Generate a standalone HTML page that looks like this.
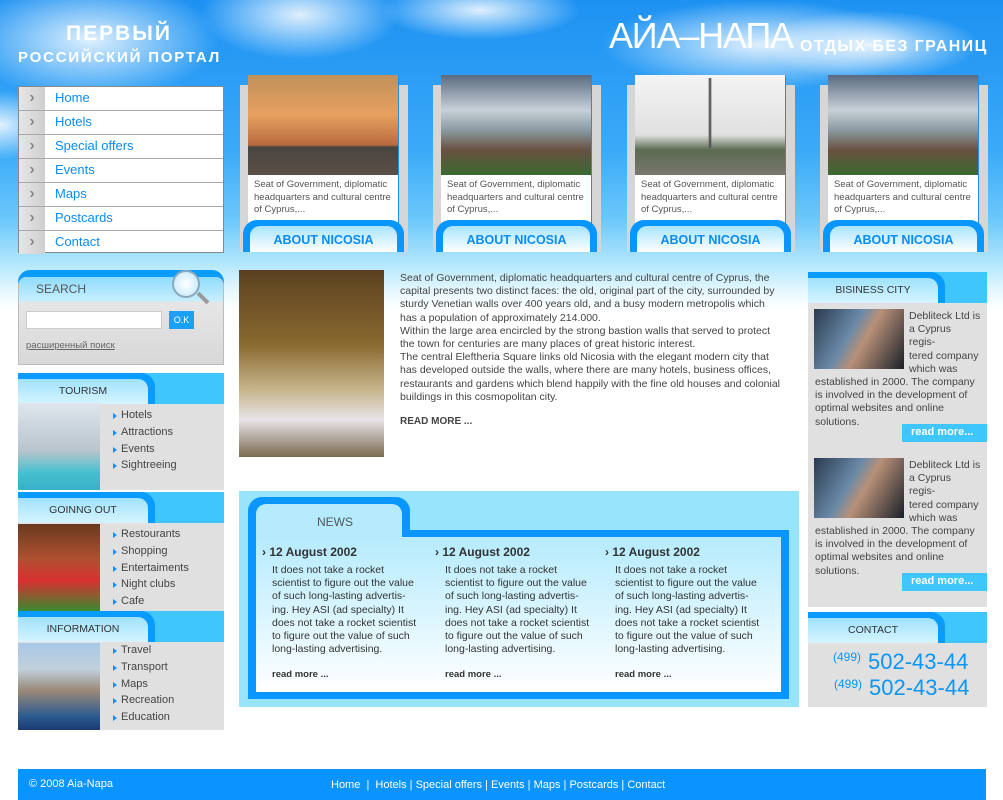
<!DOCTYPE html>
<html><head><meta charset="utf-8"><style>
*{margin:0;padding:0;box-sizing:border-box}
body{width:1003px;height:800px;position:relative;overflow:hidden;background:#fff;font-family:"Liberation Sans","DejaVu Sans",sans-serif;font-size:11px;color:#444}
.a{position:absolute}
#sky{left:0;top:0;width:1003px;height:310px;background:linear-gradient(#1e92f2 0px,#2a9cf5 70px,#3aaaf8 150px,#6cc8fb 220px,#b5e8fd 265px,#e8f8ff 292px,#fff 310px)}
.cloud{border-radius:50%;background:radial-gradient(rgba(255,255,255,.85),rgba(255,255,255,0) 70%)}
.nav{left:18px;top:86px;width:206px;height:167px;background:#fff;border:1px solid #888}
.nav div{height:24px;border-bottom:1px solid #aaa;position:relative;font-size:13px;color:#0a8cf5;padding:3px 0 0 36px}
.nav div:last-child{border:0}
.nav div:before{content:"›";position:absolute;left:0;top:0;width:26px;height:23px;background:linear-gradient(90deg,#e6e6e6,#cfcfcf);color:#888;font-weight:bold;font-size:16px;text-align:center;line-height:21px}
.card{width:168px;height:177px}
.card .bk{left:0;top:10px;width:168px;height:167px;background:#d6d6d6}
.card .wh{left:8px;top:0;width:151px;height:170px;background:#fff;border-right:1px solid #1a8ef5}
.card .im{left:8px;top:0;width:150px;height:100px}
.card .tx{left:14px;top:104px;width:146px;font-size:9.5px;line-height:12.5px;color:#555}
.card .btn{left:3px;top:145px;width:161px;height:32px;background:#0a96ff;border-radius:14px 14px 0 0}
.card .btn div{position:absolute;left:7px;top:6px;width:147px;height:26px;border-radius:10px 10px 0 0;background:linear-gradient(#a8e4fd,#fff);color:#0a8cf5;font-weight:bold;font-size:12.5px;text-align:center;padding-top:7px}
.hdr{height:31px;background:#3fc6fd}
.hdr .t{position:absolute;left:0;top:0;width:137px;height:31px;background:#0a9bff;border-radius:0 14px 0 0}
.hdr .t div{position:absolute;left:0;top:6px;width:130px;height:25px;border-radius:0 10px 0 0;background:linear-gradient(#9fe2fd,#d6f4ff);font-size:10.5px;color:#333;text-align:center;padding-top:6px}
.blk{left:18px;width:206px;background:#e0e0e0}
.blk ul{position:absolute;left:95px;list-style:none;font-size:11px;color:#444}
.blk li{height:16.8px;padding-left:8px;position:relative}
.blk li:before{content:"";position:absolute;left:0;top:4px;border-left:4px solid #1a8ef5;border-top:3px solid transparent;border-bottom:3px solid transparent}
.bl{color:#fff}
</style></head><body>
<div id="sky" class="a"></div>
<div class="a cloud" style="left:-40px;top:-20px;width:260px;height:120px"></div>
<div class="a cloud" style="left:200px;top:-30px;width:200px;height:90px"></div>
<div class="a cloud" style="left:600px;top:0;width:320px;height:90px"></div>
<div class="a cloud" style="left:760px;top:10px;width:220px;height:70px"></div>
<div class="a cloud" style="left:380px;top:-20px;width:200px;height:60px"></div>
<div class="a cloud" style="left:-60px;top:90px;width:120px;height:70px"></div>

<div class="a bl" style="left:66px;top:22px;font-size:21px;font-weight:bold;letter-spacing:2px">ПЕРВЫЙ</div>
<div class="a bl" style="left:18px;top:49px;font-size:15px;font-weight:bold;letter-spacing:1.8px">РОССИЙСКИЙ ПОРТАЛ</div>
<div class="a bl" style="left:609px;top:16px;font-size:36px;letter-spacing:-1.2px;line-height:40px">АЙА–НАПА</div>
<div class="a bl" style="left:800px;top:38px;font-size:16px;font-weight:bold;letter-spacing:1.4px">ОТДЫХ БЕЗ ГРАНИЦ</div>

<div class="a nav"><div>Home</div><div>Hotels</div><div>Special offers</div><div>Events</div><div>Maps</div><div>Postcards</div><div>Contact</div></div>

<div class="a card" style="left:240px;top:75px"><div class="a bk"></div><div class="a wh"></div><div class="a im" style="background:linear-gradient(#c0905a,#e8a060 40%,#b86a40 70%,#4a4440 72%,#5a5048)"></div><div class="a tx">Seat of Government, diplomatic headquarters and cultural centre of Cyprus,...</div><div class="a btn"><div>ABOUT NICOSIA</div></div></div>
<div class="a card" style="left:433px;top:75px"><div class="a bk"></div><div class="a wh"></div><div class="a im" style="background:linear-gradient(#5a6a80,#c8d0d8 35%,#8a9aa0 55%,#6a5040 75%,#3a6a30)"></div><div class="a tx">Seat of Government, diplomatic headquarters and cultural centre of Cyprus,...</div><div class="a btn"><div>ABOUT NICOSIA</div></div></div>
<div class="a card" style="left:627px;top:75px"><div class="a bk"></div><div class="a wh"></div><div class="a im" style="background:linear-gradient(#f4f4f4,#e0e0e0 60%,#5a6a50 75%,#7a7870)"><div class="a" style="left:70px;top:3px;width:10px;height:70px;background:linear-gradient(90deg,transparent 30%,#555 45%,#555 55%,transparent 70%)"></div></div><div class="a tx">Seat of Government, diplomatic headquarters and cultural centre of Cyprus,...</div><div class="a btn"><div>ABOUT NICOSIA</div></div></div>
<div class="a card" style="left:820px;top:75px"><div class="a bk"></div><div class="a wh"></div><div class="a im" style="background:linear-gradient(#5a6a80,#c8d0d8 35%,#8a9aa0 55%,#6a5040 75%,#3a6a30)"></div><div class="a tx">Seat of Government, diplomatic headquarters and cultural centre of Cyprus,...</div><div class="a btn"><div>ABOUT NICOSIA</div></div></div>

<!-- search -->
<div class="a" style="left:18px;top:270px;width:206px;height:95px;background:#0a9bff;border-radius:12px 12px 0 0"></div>
<div class="a" style="left:18px;top:277px;width:206px;height:88px;background:linear-gradient(#8fdcfd,#c8efff 24px,#e6e6e6 25px,#d8d8d8);border-radius:8px 8px 0 0;border:1px solid #bbb;border-top:0"></div>
<div class="a" style="left:36px;top:282px;font-size:12px;color:#555">SEARCH</div>
<div class="a" style="left:172px;top:270px;width:28px;height:28px;border-radius:50%;border:2px solid #8ab;background:radial-gradient(#fff,#bfe6fb)"></div>
<div class="a" style="left:196px;top:296px;width:14px;height:4px;background:#999;transform:rotate(45deg)"></div>
<div class="a" style="left:26px;top:311px;width:136px;height:18px;background:#fff;border:1px solid #ccc"></div>
<div class="a" style="left:169px;top:311px;width:25px;height:18px;background:#1aa0f5;color:#fff;font-size:9px;text-align:center;line-height:18px">O.K</div>
<div class="a" style="left:26px;top:340px;font-size:9.5px;color:#666;text-decoration:underline">расширенный поиск</div>

<!-- blocks -->
<div class="a blk" style="top:373px;height:117px"><div class="a hdr" style="left:0;top:0;width:206px"><div class="t"><div>TOURISM</div></div></div><div class="a" style="left:0;top:30px;width:82px;height:87px;background:linear-gradient(#dfe6ee,#b8c4cc 55%,#46c0d0 80%,#38b0c8)"></div><ul style="top:36px"><li>Hotels</li><li>Attractions</li><li>Events</li><li>Sightreeing</li></ul></div>
<div class="a blk" style="top:492px;height:119px"><div class="a hdr" style="left:0;top:0;width:206px"><div class="t"><div>GOINNG OUT</div></div></div><div class="a" style="left:0;top:32px;width:82px;height:87px;background:linear-gradient(#6a3a20,#b05030 40%,#d83030 65%,#3a8a30)"></div><ul style="top:36px"><li>Restourants</li><li>Shopping</li><li>Entertaiments</li><li>Night clubs</li><li>Cafe</li></ul></div>
<div class="a blk" style="top:611px;height:119px"><div class="a hdr" style="left:0;top:0;width:206px"><div class="t"><div>INFORMATION</div></div></div><div class="a" style="left:0;top:32px;width:82px;height:87px;background:linear-gradient(#a8c8e8,#c0d0dc 30%,#9a8878 55%,#2a5a90 85%,#1a3a70)"></div><ul style="top:33px"><li>Travel</li><li>Transport</li><li>Maps</li><li>Recreation</li><li>Education</li></ul></div>

<!-- main -->
<div class="a" style="left:239px;top:270px;width:145px;height:187px;background:linear-gradient(#5a4020,#8a6a30 40%,#c8b890 65%,#e8e4e8 80%,#7a6a50)"></div>
<div class="a" style="left:400px;top:272px;width:398px;font-size:10.5px;line-height:13.2px;color:#444">Seat of Government, diplomatic headquarters and cultural centre of Cyprus, the<br>capital presents two distinct faces: the old, original part of the city, surrounded by<br>sturdy Venetian walls over 400 years old, and a busy modern metropolis which<br>has a population of approximately 214.000.<br>Within the large area encircled by the strong bastion walls that served to protect<br>the town for centuries are many places of great historic interest.<br>The central Eleftheria Square links old Nicosia with the elegant modern city that<br>has developed outside the walls, where there are many hotels, business offices,<br>restaurants and gardens which blend happily with the fine old houses and colonial<br>buildings in this cosmopolitan city.</div>
<div class="a" style="left:400px;top:416px;font-size:10px;font-weight:bold;color:#444">READ MORE ...</div>

<!-- news -->
<div class="a" style="left:239px;top:491px;width:560px;height:216px;background:#99e4fd"></div>
<div class="a" style="left:248px;top:497px;width:162px;height:40px;background:#0a96ff;border-radius:14px 14px 0 0"></div>
<div class="a" style="left:248px;top:530px;width:541px;height:169px;background:#0a96ff"></div>
<div class="a" style="left:256px;top:504px;width:146px;height:40px;background:#b5ebfd;border-radius:10px 10px 0 0"></div>
<div class="a" style="left:256px;top:537px;width:525px;height:155px;background:linear-gradient(#b5ebfd,#f4fcff 85%,#fff)"></div>
<div class="a" style="left:317px;top:515px;font-size:12px;color:#555">NEWS</div>
<div class="a" style="left:262px;top:545px;width:170px"><b style="font-size:12px;color:#333">› 12 August 2002</b><div style="padding-left:10px;margin-top:5px;font-size:10.5px;line-height:13.2px;color:#333">It does not take a rocket<br>scientist to figure out the value<br>of such long-lasting advertis-<br>ing. Hey ASI (ad specialty) It<br>does not take a rocket scientist<br>to figure out the value of such<br>long-lasting advertising.</div><div style="padding-left:10px;margin-top:13px;font-size:9.5px;font-weight:bold;color:#333">read more ...</div></div>
<div class="a" style="left:435px;top:545px;width:170px"><b style="font-size:12px;color:#333">› 12 August 2002</b><div style="padding-left:10px;margin-top:5px;font-size:10.5px;line-height:13.2px;color:#333">It does not take a rocket<br>scientist to figure out the value<br>of such long-lasting advertis-<br>ing. Hey ASI (ad specialty) It<br>does not take a rocket scientist<br>to figure out the value of such<br>long-lasting advertising.</div><div style="padding-left:10px;margin-top:13px;font-size:9.5px;font-weight:bold;color:#333">read more ...</div></div>
<div class="a" style="left:605px;top:545px;width:170px"><b style="font-size:12px;color:#333">› 12 August 2002</b><div style="padding-left:10px;margin-top:5px;font-size:10.5px;line-height:13.2px;color:#333">It does not take a rocket<br>scientist to figure out the value<br>of such long-lasting advertis-<br>ing. Hey ASI (ad specialty) It<br>does not take a rocket scientist<br>to figure out the value of such<br>long-lasting advertising.</div><div style="padding-left:10px;margin-top:13px;font-size:9.5px;font-weight:bold;color:#333">read more ...</div></div>

<!-- right -->
<div class="a" style="left:808px;top:272px;width:179px;height:335px;background:#e0e0e0"></div>
<div class="a hdr" style="left:808px;top:272px;width:179px"><div class="t"><div>BISINESS CITY</div></div></div>
<div class="a" style="left:814px;top:309px;width:90px;height:60px;background:linear-gradient(120deg,#2a3a50,#6a8aa8 40%,#b89078 55%,#1a2028)"></div>
<div class="a" style="left:815px;top:310px;width:170px;font-size:10.5px;line-height:13.2px;color:#444"><div style="padding-left:94px">Debliteck Ltd is<br>a Cyprus<br>regis-<br>tered company<br>which was</div>established in 2000. The company<br>is involved in the development of<br>optimal websites and online<br>solutions.</div>
<div class="a" style="left:902px;top:424px;width:85px;height:18px;background:#3fc6fd;color:#fff;font-weight:bold;font-size:11px;padding:2px 0 0 9px">read more...</div>
<div class="a" style="left:814px;top:458px;width:90px;height:60px;background:linear-gradient(120deg,#2a3a50,#6a8aa8 40%,#b89078 55%,#1a2028)"></div>
<div class="a" style="left:815px;top:459px;width:170px;font-size:10.5px;line-height:13.2px;color:#444"><div style="padding-left:94px">Debliteck Ltd is<br>a Cyprus<br>regis-<br>tered company<br>which was</div>established in 2000. The company<br>is involved in the development of<br>optimal websites and online<br>solutions.</div>
<div class="a" style="left:902px;top:573px;width:85px;height:18px;background:#3fc6fd;color:#fff;font-weight:bold;font-size:11px;padding:2px 0 0 9px">read more...</div>
<div class="a" style="left:808px;top:612px;width:179px;height:95px;background:#e0e0e0"></div>
<div class="a hdr" style="left:808px;top:612px;width:179px"><div class="t"><div>CONTACT</div></div></div>
<div class="a" style="left:833px;top:650px;color:#0a96f5;font-size:12px">(499)</div>
<div class="a" style="left:868px;top:649px;color:#0a96f5;font-size:22px;line-height:26px">502-43-44</div>
<div class="a" style="left:834px;top:677px;color:#0a96f5;font-size:12px">(499)</div>
<div class="a" style="left:869px;top:675px;color:#0a96f5;font-size:22px;line-height:26px">502-43-44</div>

<!-- footer -->
<div class="a" style="left:18px;top:769px;width:968px;height:31px;background:#0a94ff"></div>
<div class="a bl" style="left:29px;top:778px;font-size:11px">© 2008 Aia-Napa</div>
<div class="a bl" style="left:331px;top:779px;font-size:11px">Home &nbsp;|&nbsp; Hotels | Special offers | Events | Maps | Postcards | Contact</div>
</body></html>
